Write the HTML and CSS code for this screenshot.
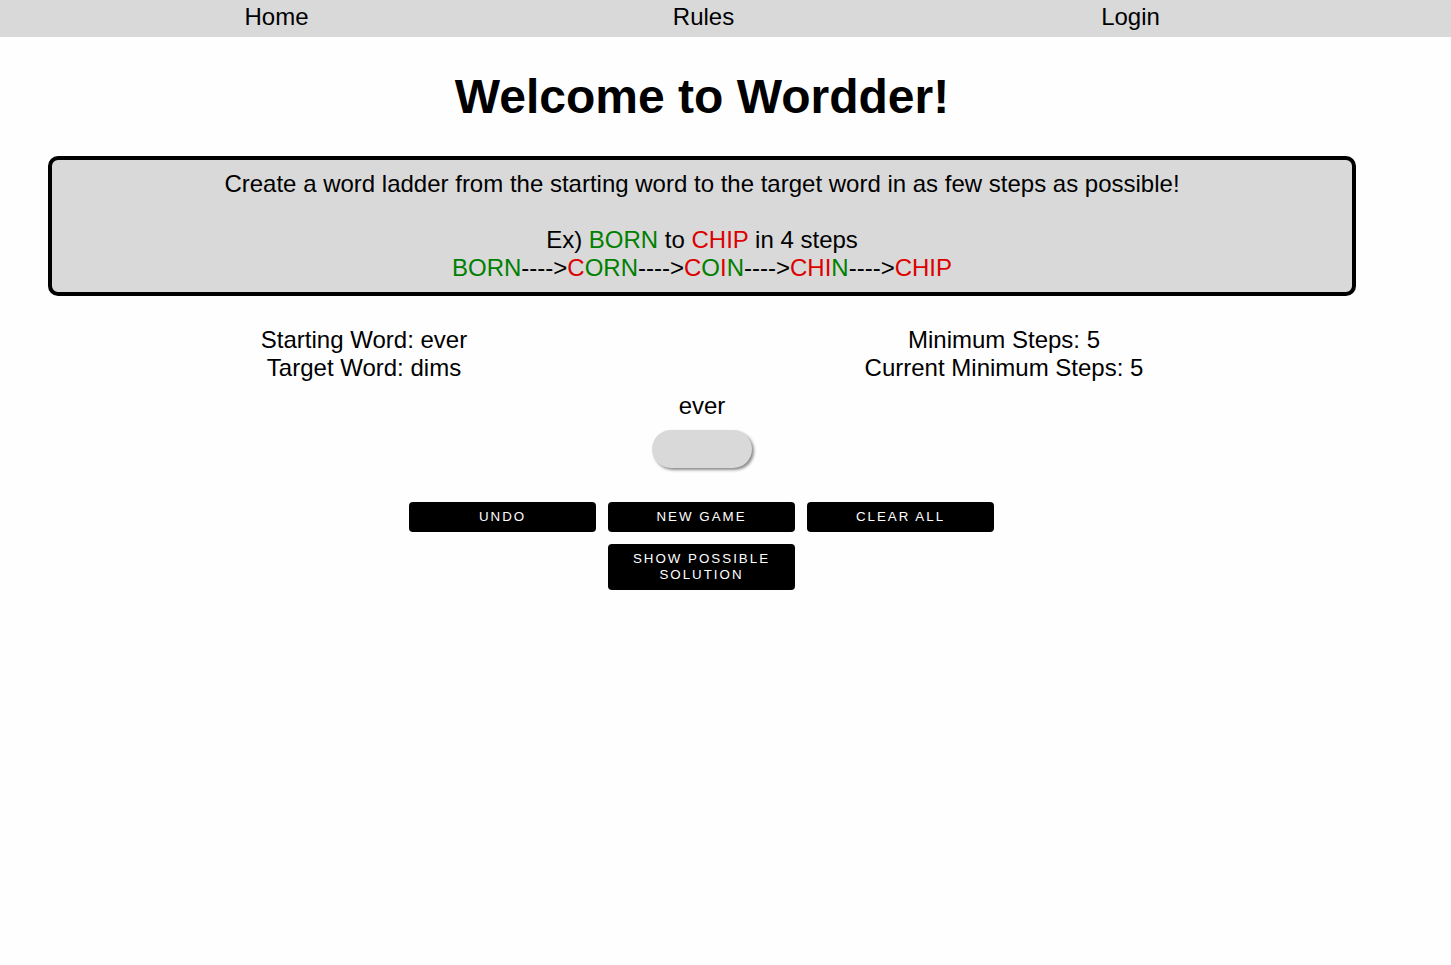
FILE: index.html
```html
<!DOCTYPE html>
<html lang="en">
<head>
<meta charset="utf-8">
<title>Wordder</title>
<link rel="stylesheet" href="styles.css">
</head>
<body>
<nav class="nav">
  <div class="nav-inner">
    <a class="nav-link" href="#">Home</a>
    <a class="nav-link" href="#">Rules</a>
    <a class="nav-link" href="#">Login</a>
  </div>
</nav>
<main class="page">
  <h1 class="title">Welcome to Wordder!</h1>
  <section class="rules">
    <p class="rules-text">Create a word ladder from the starting word to the target word in as few steps as possible!</p>
    <p class="rules-text blank">&nbsp;</p>
    <p class="rules-text">Ex) <span class="g">BORN</span> to <span class="r">CHIP</span> in 4 steps</p>
    <p class="rules-text"><span class="g">BORN</span>----&gt;<span class="r">C</span><span class="g">ORN</span>----&gt;<span class="r">C</span><span class="g">O</span><span class="r">I</span><span class="g">N</span>----&gt;<span class="r">CHI</span><span class="g">N</span>----&gt;<span class="r">CHIP</span></p>
  </section>
  <section class="stats">
    <div class="stat-col">
      <div>Starting Word: ever</div>
      <div>Target Word: dims</div>
    </div>
    <div class="stat-col">
      <div>Minimum Steps: 5</div>
      <div>Current Minimum Steps: 5</div>
    </div>
  </section>
  <div class="current-word">ever</div>
  <div class="input-wrap"><div class="pill"></div></div>
  <div class="buttons">
    <button class="btn">Undo</button>
    <button class="btn">New Game</button>
    <button class="btn">Clear All</button>
    <button class="btn">Show Possible Solution</button>
  </div>
</main>
</body>
</html>
```
FILE: styles.css
```css
html, body {
  margin: 0;
  padding: 0;
  background: #fefefe;
}
body {
  font-family: "Liberation Sans", Arial, sans-serif;
  font-size: 24px;
  line-height: 28px;
  color: #000;
}
.nav {
  background: #d9d9d9;
  height: 37px;
}
.nav-inner {
  width: 1281px;
  margin-left: 63px;
  display: grid;
  grid-template-columns: 1fr 1fr 1fr;
}
.nav-link {
  text-align: center;
  color: #000;
  text-decoration: none;
  padding-top: 3px;
}
.page {
  width: 1404px;
}
.title {
  margin: 32px 0 32px;
  font-size: 48px;
  line-height: 55px;
  text-align: center;
  font-weight: bold;
}
.rules {
  margin-left: 48px;
  width: 1308px;
  box-sizing: border-box;
  background: #d9d9d9;
  border: 4px solid #000;
  border-radius: 10px;
  padding: 10px 0;
  text-align: center;
}
.rules-text {
  margin: 0;
}
.g { color: #008000; }
.r { color: #dd0000; }
.stats {
  margin: 30px 0 0 44px;
  display: grid;
  grid-template-columns: 640px 640px;
  text-align: center;
}
.current-word {
  margin-top: 10px;
  text-align: center;
}
.input-wrap {
  display: flex;
  justify-content: center;
  margin-top: 10px;
}
.pill {
  width: 100px;
  height: 38px;
  border-radius: 19px;
  background: #d9d9d9;
  box-shadow: 2px 2px 3px rgba(0, 0, 0, 0.45);
}
.buttons {
  width: 585px;
  margin: 34px 0 0 409px;
  display: flex;
  flex-wrap: wrap;
  justify-content: center;
  gap: 12px;
}
.btn {
  width: 187px;
  padding: 7px 12px;
  box-sizing: border-box;
  background: #000;
  color: #fff;
  border: none;
  border-radius: 4px;
  font-family: "Liberation Sans", Arial, sans-serif;
  font-size: 13.33px;
  line-height: 16px;
  letter-spacing: 2px;
  text-transform: uppercase;
  text-align: center;
}
```
